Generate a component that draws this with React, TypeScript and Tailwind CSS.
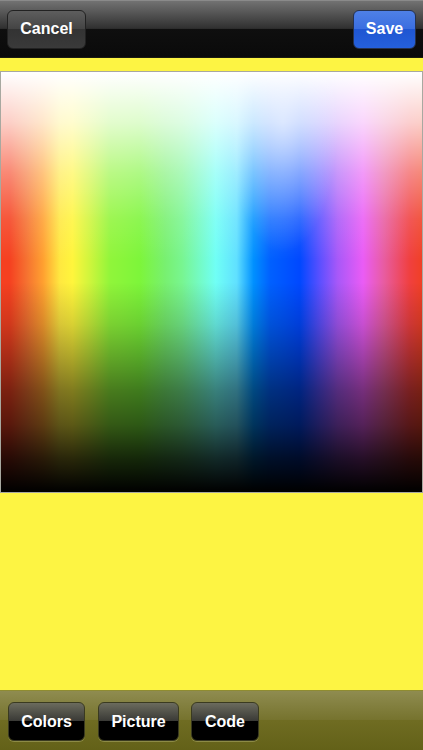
import React from 'react';

const font = "font-['Liberation_Sans',Arial,sans-serif]";

const ToolButton = ({ label, width }: { label: string; width: string }) => (
  <button
    className={`${width} h-[39px] rounded-[6px] border border-[#3a3a20] bg-[linear-gradient(to_bottom,#6b6b5e_0%,#3a3a36_48%,#000000_50%,#000000_100%)] text-[16px] font-bold text-white shadow-[0_1px_0_rgba(255,255,200,0.25)]`}
  >
    {label}
  </button>
);

const App: React.FC = () => {
  return (
    <div className={`flex h-[750px] w-[423px] flex-col overflow-hidden bg-[#fdf443] ${font}`}>
      <header className="flex h-[58px] shrink-0 items-center justify-between border-t border-[#8a8a8a] border-b border-b-[#1c1c10] bg-[linear-gradient(to_bottom,#727272_0%,#303030_49%,#0f0f0f_50%,#0a0a0a_100%)] px-[7px]">
        <button className="h-[39px] w-[79px] rounded-[6px] border border-[#222] bg-[linear-gradient(to_bottom,#5e5e5e_0%,#444444_48%,#333333_50%,#3a3a3a_100%)] text-[16px] font-bold text-white">
          Cancel
        </button>
        <button className="h-[39px] w-[63px] rounded-[6px] border border-[#26324f] bg-[linear-gradient(to_bottom,#4f80e6_0%,#3a6ee0_48%,#1f56d2_50%,#2560dc_100%)] text-[16px] font-bold text-white">
          Save
        </button>
      </header>

      <div className="mt-[13px] h-[422px] w-[423px] shrink-0 border border-[#a8a8a0] bg-[radial-gradient(ellipse_55px_130px_at_67%_12%,rgba(255,255,255,0.45),rgba(255,255,255,0)),linear-gradient(to_bottom,rgba(255,255,255,1)_0%,rgba(255,255,255,0.75)_12%,rgba(255,255,255,0.38)_24%,rgba(255,255,255,0.12)_35%,rgba(255,255,255,0)_45%,rgba(0,0,0,0)_50%,rgba(0,0,0,0.15)_60%,rgba(0,0,0,0.32)_68%,rgba(0,0,0,0.5)_76%,rgba(0,0,0,0.64)_84%,rgba(0,0,0,0.84)_92%,rgba(0,0,0,1)_100%),linear-gradient(to_right,#f54020_0%,#f54020_2%,#f57030_6%,#ffa030_10%,#ffe840_14%,#fff53c_17%,#d0f53c_21%,#90f53a_26%,#7df53a_33%,#78f070_39%,#78f590_43%,#70fff5_51%,#60e0ff_56%,#0090ff_60%,#0060ff_64%,#0048ff_71%,#6050ff_76%,#a858f8_80%,#ea5cf5_86%,#e85ca0_91%,#f04040_97%,#f04025_100%)]" />

      <div className="flex-1" />

      <footer className="flex h-[60px] shrink-0 border-t border-[#8f8c30] bg-[linear-gradient(to_bottom,#8f8c50_0%,#76732e_49%,#6f6c22_50%,#636118_100%)] pl-[8px] pt-[11px]">
        <ToolButton label="Colors" width="w-[77px]" />
        <div className="w-[13px]" />
        <ToolButton label="Picture" width="w-[81px]" />
        <div className="w-[12px]" />
        <ToolButton label="Code" width="w-[68px]" />
      </footer>
    </div>
  );
};

export default App;
